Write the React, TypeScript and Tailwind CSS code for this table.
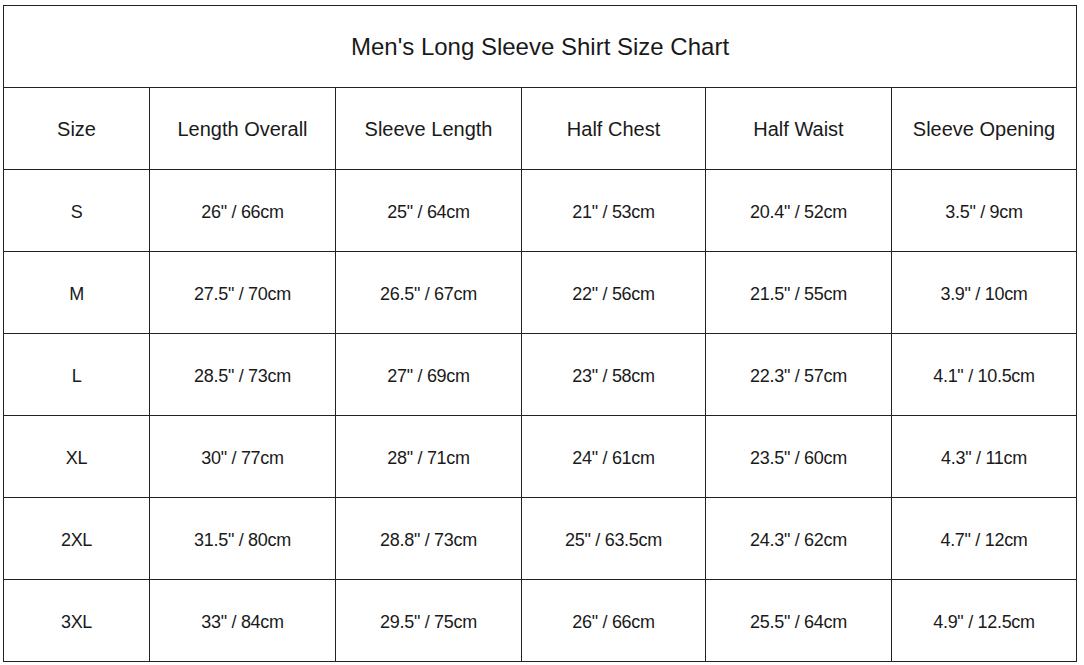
import React from "react";

const headers = ["Size", "Length Overall", "Sleeve Length", "Half Chest", "Half Waist", "Sleeve Opening"];
const rows: string[][] = [
  ["S", '26" / 66cm', '25" / 64cm', '21" / 53cm', '20.4" / 52cm', '3.5" / 9cm'],
  ["M", '27.5" / 70cm', '26.5" / 67cm', '22" / 56cm', '21.5" / 55cm', '3.9" / 10cm'],
  ["L", '28.5" / 73cm', '27" / 69cm', '23" / 58cm', '22.3" / 57cm', '4.1" / 10.5cm'],
  ["XL", '30" / 77cm', '28" / 71cm', '24" / 61cm', '23.5" / 60cm', '4.3" / 11cm'],
  ["2XL", '31.5" / 80cm', '28.8" / 73cm', '25" / 63.5cm', '24.3" / 62cm', '4.7" / 12cm'],
  ["3XL", '33" / 84cm', '29.5" / 75cm', '26" / 66cm', '25.5" / 64cm', '4.9" / 12.5cm'],
];

export default function App() {
  return (
    <div
      className="w-[1084px] h-[665px] bg-white pt-[5px] pl-[3px] text-[#1a1a1a]"
      style={{ fontFamily: '"Liberation Sans", Arial, sans-serif' }}
    >
      <div className="w-[1074px] border-l border-t border-[#222]">
        <div className="h-[82px] border-r border-b border-[#222] flex items-center justify-center text-[24px]">
          Men's Long Sleeve Shirt Size Chart
        </div>
        <div className="grid grid-cols-[146px_186px_186px_184px_186px_185px]">
          {headers.map((h) => (
            <div
              key={h}
              className="h-[82px] border-r border-b border-[#222] flex items-center justify-center text-[20px]"
            >
              {h}
            </div>
          ))}
          {rows.map((r) =>
            r.map((c, i) => (
              <div
                key={r[0] + i}
                className="h-[82px] pt-[4px] border-r border-b border-[#222] flex items-center justify-center text-[18px] tracking-[-0.3px]"
              >
                {c}
              </div>
            ))
          )}
        </div>
      </div>
    </div>
  );
}
